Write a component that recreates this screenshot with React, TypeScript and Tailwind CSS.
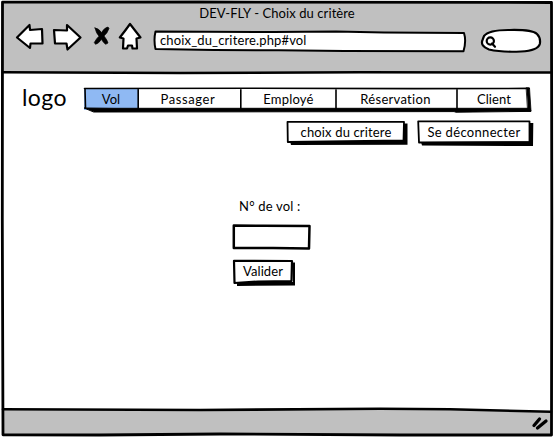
import type { ReactNode } from "react";

type InkProps = { children: ReactNode };

/* Hand-drawn outline that sits over the box it belongs to. */
function Ink({ children }: InkProps) {
  return (
    <svg
      className="pointer-events-none absolute left-0 top-0 h-full w-full overflow-visible"
      fill="none"
      stroke="#000"
      strokeWidth="2"
      strokeLinejoin="round"
      strokeLinecap="round"
      aria-hidden="true"
    >
      {children}
    </svg>
  );
}

const tabs = [
  { label: "Vol", box: "w-[54px]", text: "tracking-[0.1px]" },
  { label: "Passager", box: "w-[103px] pr-[3px]", text: "tracking-[0.6px]" },
  { label: "Employé", box: "w-[95px]", text: "tracking-[0.2px]" },
  { label: "Réservation", box: "w-[121px] pr-[2px]", text: "tracking-[0.3px]" },
  { label: "Client", box: "w-[72px] pl-[2px]", text: "tracking-[0.1px]" },
];

function Toolbar() {
  return (
    <div className="flex h-[34px] items-start pl-[13px]">
      <svg width="130" height="34" viewBox="15 21 130 34" className="shrink-0" fill="#fff" stroke="#000" strokeWidth="2.2" strokeLinejoin="round" strokeLinecap="round">
        <path d="M17 37.5 L29.5 25 L30 30 L42 29 L42.5 43.5 L30.5 43.5 L30 48 Z" />
        <path d="M54 30 L67 30.5 L67 25 L80.5 37.5 L67.5 49.5 L66.5 43.5 L55 43.5 Z" />
        <path d="M95 28 Q98.5 28 101.5 32.5 Q104.5 27.5 108 27 L109 28.5 Q107.5 33 104 36 Q107 39.5 108 43 L105.5 44.3 Q103 42 101.3 39.3 Q99 43.5 95.5 44.3 L94.3 42.5 Q96.5 38.5 99 36.2 Q96 33 95 28 Z" fill="#000" strokeWidth="0.7" />
        <path d="M119.8 37.5 Q125 31 130 24 L140.5 37.5 L136.5 38.5 L137 48.5 L132.5 48.5 L132 45.5 L128 45.5 L127 48.5 L123 48.5 L123.5 38.5 Z" />
      </svg>
      <div className="relative ml-[9px] mt-[10px] flex h-[20px] w-[312px] items-center pl-[6px] text-[13px] tracking-[0.14px]">
        <Ink>
          <path d="M1.5 0.5 L120 1 L182 0.5 L230 1.5 L310 2 Q312.5 10 309.5 20.3 L190 20 L125 19.3 L60 19 L1.5 18 Q-0.5 9 1.5 0.5 Z" fill="#fff" />
        </Ink>
        <span className="relative -translate-y-px whitespace-nowrap">choix_du_critere.php#vol</span>
      </div>
      <svg width="62" height="28" viewBox="480 28 62 28" className="ml-[14px] mt-[7px] shrink-0" fill="#fff" stroke="#000" strokeWidth="2.2" strokeLinecap="round">
        <path d="M484 36 Q489 29.7 510 30 Q532 29.5 537 34 Q541 38 539.8 44 Q538 50.5 521 51.5 Q502 52.5 489 49.5 Q480 46 482.5 40 Z" />
        <circle cx="490.3" cy="41" r="3.6" strokeWidth="2.2" />
        <path d="M492 43.5 L495 46.8" strokeWidth="2.2" />
      </svg>
    </div>
  );
}

export default function App() {
  return (
    <div className="relative flex h-[437px] w-[554px] flex-col overflow-hidden bg-white p-[2px] pb-[3px] font-['Lato','Open_Sans',sans-serif] text-[13px] leading-[16px] text-black">
      <header className="h-[70px] shrink-0 bg-[#c0c0c0] pt-[3px]">
        <h1 className="h-[16px] text-center text-[13px] font-normal tracking-[0.08px]">DEV-FLY - Choix du critère</h1>
        <Toolbar />
      </header>

      <main className="flex min-h-0 flex-1 flex-col">
        <div className="mt-[15px] flex h-[26px] items-start pl-[20px]">
          <div className="w-[62px] -translate-y-[3px] text-[23px] leading-[26px] tracking-[0.4px]">logo</div>
          <nav className="relative mt-px flex h-[22px]">
            {tabs.map((tab, i) => (
              <div key={tab.label} className={`${tab.box} relative flex items-center justify-center ${i === 0 ? "bg-[#8fb9f3]" : "bg-white"}`}>
                <span className={`${tab.text} relative whitespace-nowrap`}>{tab.label}</span>
              </div>
            ))}
            <Ink>
              <path d="M0.5 0.5 L170 0.3 L330 0.6 L445 0.4 M1 1 L1.5 20 M54.2 1 V21 M156.8 1 V21 M252 1 V21 M373 1 V22" strokeWidth="1.6" />
              <path d="M0.5 20 L30 20.3 L446 20.3 L447 23.4 L372 24.2 L370 23.6 L10 24 Z" fill="#000" stroke="#000" strokeWidth="1" />
              <path d="M442.5 -0.2 L445.5 0 L447 23 L444 23 Z" fill="#000" strokeWidth="0.8" />
            </Ink>
          </nav>
        </div>

        <div className="mt-[7px] flex h-[25px] items-start justify-end gap-[13px] pr-[22px]">
          <button className="relative mt-[2px] h-[20px] w-[118px] bg-white text-[13px] leading-[19px] tracking-[0.15px]">
            <Ink>
              <path d="M3 19 L117 19 L117 1.5 L120.5 1.5 L120.5 22.7 L4 23 Z" fill="#000" stroke="none" />
              <path d="M0.5 -0.2 L117 -0.2 L116.5 18.5 L40 19.5 L0.8 20 Z" strokeWidth="1.8" />
            </Ink>
            <span className="relative">choix du critere</span>
          </button>
          <button className="relative mt-[2px] h-[20px] w-[112px] bg-white text-[13px] leading-[19px] tracking-[0.32px]">
            <Ink>
              <path d="M3 20 L112 19.5 L112 1 L115.3 1 L115 24 L4 23.5 Z" fill="#000" stroke="none" />
              <path d="M0.2 -0.7 L111.5 -0.7 L111.5 20 L1 20.5 Z" strokeWidth="1.8" />
            </Ink>
            <span className="relative">Se déconnecter</span>
          </button>
        </div>

        <form className="ml-[231px] mt-[53px] flex w-[80px] flex-col">
          <label className="ml-[6px] h-[16px] whitespace-nowrap tracking-[0.2px]">N° de vol :</label>
          <div className="relative mt-[11px] h-[24px] w-[78px] bg-white">
            <Ink>
              <path d="M0.8 0.5 L30 0.8 L76.5 1 L76 23.5 L40 23 L0.8 23 Z" strokeWidth="2.5" />
            </Ink>
          </div>
          <div className="relative mt-[11px] h-[24px] w-[60px] bg-white text-center leading-[22px] tracking-[0.1px]">
            <Ink>
              <path d="M4 22 L60 22 L59 2.5 L62 2.5 L62 25.5 L4 26 Z" fill="#000" stroke="none" />
              <path d="M1 0.8 L59 1 L58.5 21 L25 21.5 L1.5 23 Z" strokeWidth="2.2" />
            </Ink>
            <span className="relative">Valider</span>
          </div>
        </form>
      </main>

      <footer className="flex h-[25px] shrink-0 items-center justify-end bg-[#c0c0c0] pr-[3px] pt-[3px]">
        <svg width="18" height="16" viewBox="531 416 18 16" stroke="#000" strokeWidth="3.3" strokeLinecap="round">
          <path d="M534 426.5 L539.5 420 M537.5 429 L546 422" />
        </svg>
      </footer>

      {/* Wobbly pen line around the whole window */}
      <Ink>
        <path d="M440 408.8 L551 408.8 V411.5 Z" fill="#fff" stroke="none" />
        <path d="M2.5 2.2 L200 2 L551.5 2.5 L551.8 220 L551.5 435 L400 435 L220 434 L100 435 L3 434.8 L2.3 220 Z" strokeWidth="2.8" />
        <path d="M3 72.3 L180 73 L360 72.3 L551 72.5 M3 409.3 L200 410 L380 408.8 L450 409.3 L551 411.8" strokeWidth="2.6" />
      </Ink>
    </div>
  );
}
